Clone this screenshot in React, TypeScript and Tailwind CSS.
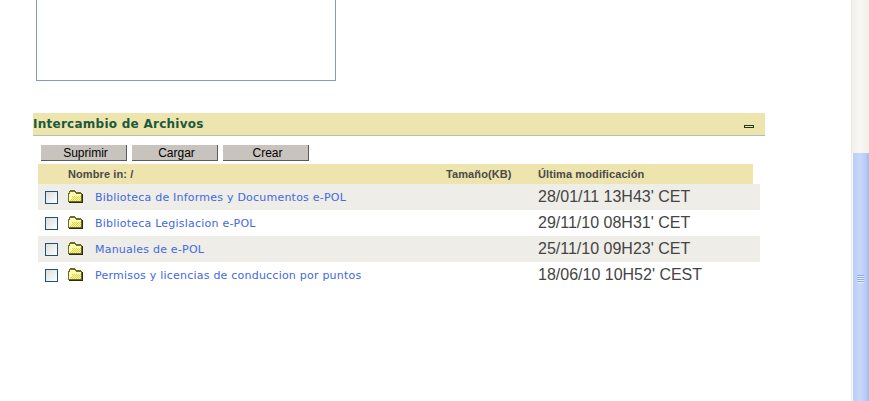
const ROWS = [
  { name: "Biblioteca de Informes y Documentos e-POL", date: "28/01/11 13H43' CET", shaded: true },
  { name: "Biblioteca Legislacion e-POL", date: "29/11/10 08H31' CET", shaded: false },
  { name: "Manuales de e-POL", date: "25/11/10 09H23' CET", shaded: true },
  { name: "Permisos y licencias de conduccion por puntos", date: "18/06/10 10H52' CEST", shaded: false },
];

function FolderIcon() {
  return (
    <svg width="15" height="14" viewBox="0 0 15 14" className="block" shapeRendering="crispEdges">
      <defs>
        <pattern id="dither" width="2" height="2" patternUnits="userSpaceOnUse">
          <rect width="2" height="2" fill="#fdfa9a" />
          <rect width="1" height="1" fill="#dccf55" />
          <rect x="1" y="1" width="1" height="1" fill="#dccf55" />
        </pattern>
      </defs>
      <path d="M0 3h1V1h1V0h5v1h1v1h5v1h1v9H0z" fill="#6b6b2e" />
      <path d="M1 4h1V2h5v1h1v1h5v7H1z" fill="#fdfbb0" />
      <path d="M4 6h9v5H2V9h2z" fill="url(#dither)" />
      <path d="M1 12h13V4h1v9H1z" fill="#2a2a14" />
    </svg>
  );
}

function Checkbox() {
  return <div className="w-[13px] h-[13px] border border-[#1c5180] bg-linear-to-br from-[#dcdcd7] to-white" />;
}

function ActionButton({ label, width }: { label: string; width: string }) {
  return (
    <button
      className={`${width} h-[16px] pl-[4px] bg-[#c8c4bd] border-b border-r border-[#5a5a5a] text-[12px] leading-[16px] text-black text-center font-['Liberation_Sans',sans-serif]`}
    >
      {label}
    </button>
  );
}

function Scrollbar() {
  return (
    <div className="w-[18px] h-full flex flex-col bg-linear-to-r from-[#f3f1ec] via-[#f8f7f3] to-[#f1efe8] border-l border-[#ece9d8]">
      <div className="h-[153px]" />
      <div className="flex-1 flex flex-col items-center bg-linear-to-r from-[#b9cdf8] via-[#c8d8fb] to-[#b4c8f6] border-l border-white border-r-2 border-r-[#a9c0ea] pt-[122px]">
        <div className="w-[7px] h-[8px] bg-[repeating-linear-gradient(to_bottom,#8fa9ee_0px,#8fa9ee_1px,#e6edfd_1px,#e6edfd_2px)]" />
      </div>
    </div>
  );
}

export default function App() {
  return (
    <div className="flex h-[401px] w-[869px] overflow-hidden bg-white">
      <main className="w-[851px] shrink-0 pl-[33px]">
        <div className="ml-[3px] w-[300px] h-[81px] border-x border-b border-[#7f9db9]" />

        <div className="w-[732px] h-[23px] mt-[32px] flex items-center justify-between bg-[#eee4ae] border-b border-[#b9b9b9]">
          <span className="text-[12px] tracking-[0.26px] font-bold text-[#1b5a3c] font-['DejaVu_Sans',sans-serif]">
            Intercambio de Archivos
          </span>
          <div className="w-[10px] h-[3px] mr-[11px] mt-[4px] border border-[#1f3d24] bg-[#eee4ae]" />
        </div>

        <div className="flex gap-[5px] ml-[8px] mt-[9px]">
          <ActionButton label="Suprimir" width="w-[86px]" />
          <ActionButton label="Cargar" width="w-[86px]" />
          <ActionButton label="Crear" width="w-[86px]" />
        </div>

        <div className="ml-[5px] mt-[3px] w-[715px] h-[20px] flex items-center bg-[#eee4ae] text-[11px] tracking-[0.1px] font-bold text-[#4a4a4a] font-['Liberation_Sans',sans-serif]">
          <span className="w-[408px] pl-[30px]">Nombre in: /</span>
          <span className="w-[92px]">Tamaño(KB)</span>
          <span>Última modificación</span>
        </div>

        <div className="ml-[5px] w-[722px]">
          {ROWS.map((row) => (
            <div key={row.name} className={`h-[26px] flex items-center ${row.shaded ? "bg-[#eeede8]" : "bg-white"}`}>
              <div className="w-[30px] pl-[7px]">
                <Checkbox />
              </div>
              <div className="w-[27px]">
                <FolderIcon />
              </div>
              <a className="w-[443px] pt-[2px] text-[11px] tracking-[0.22px] text-[#4169e1] font-['DejaVu_Sans',sans-serif]">{row.name}</a>
              <span className="text-[16px] text-[#444444] font-['Liberation_Sans',sans-serif]">{row.date}</span>
            </div>
          ))}
        </div>
      </main>
      <Scrollbar />
    </div>
  );
}
